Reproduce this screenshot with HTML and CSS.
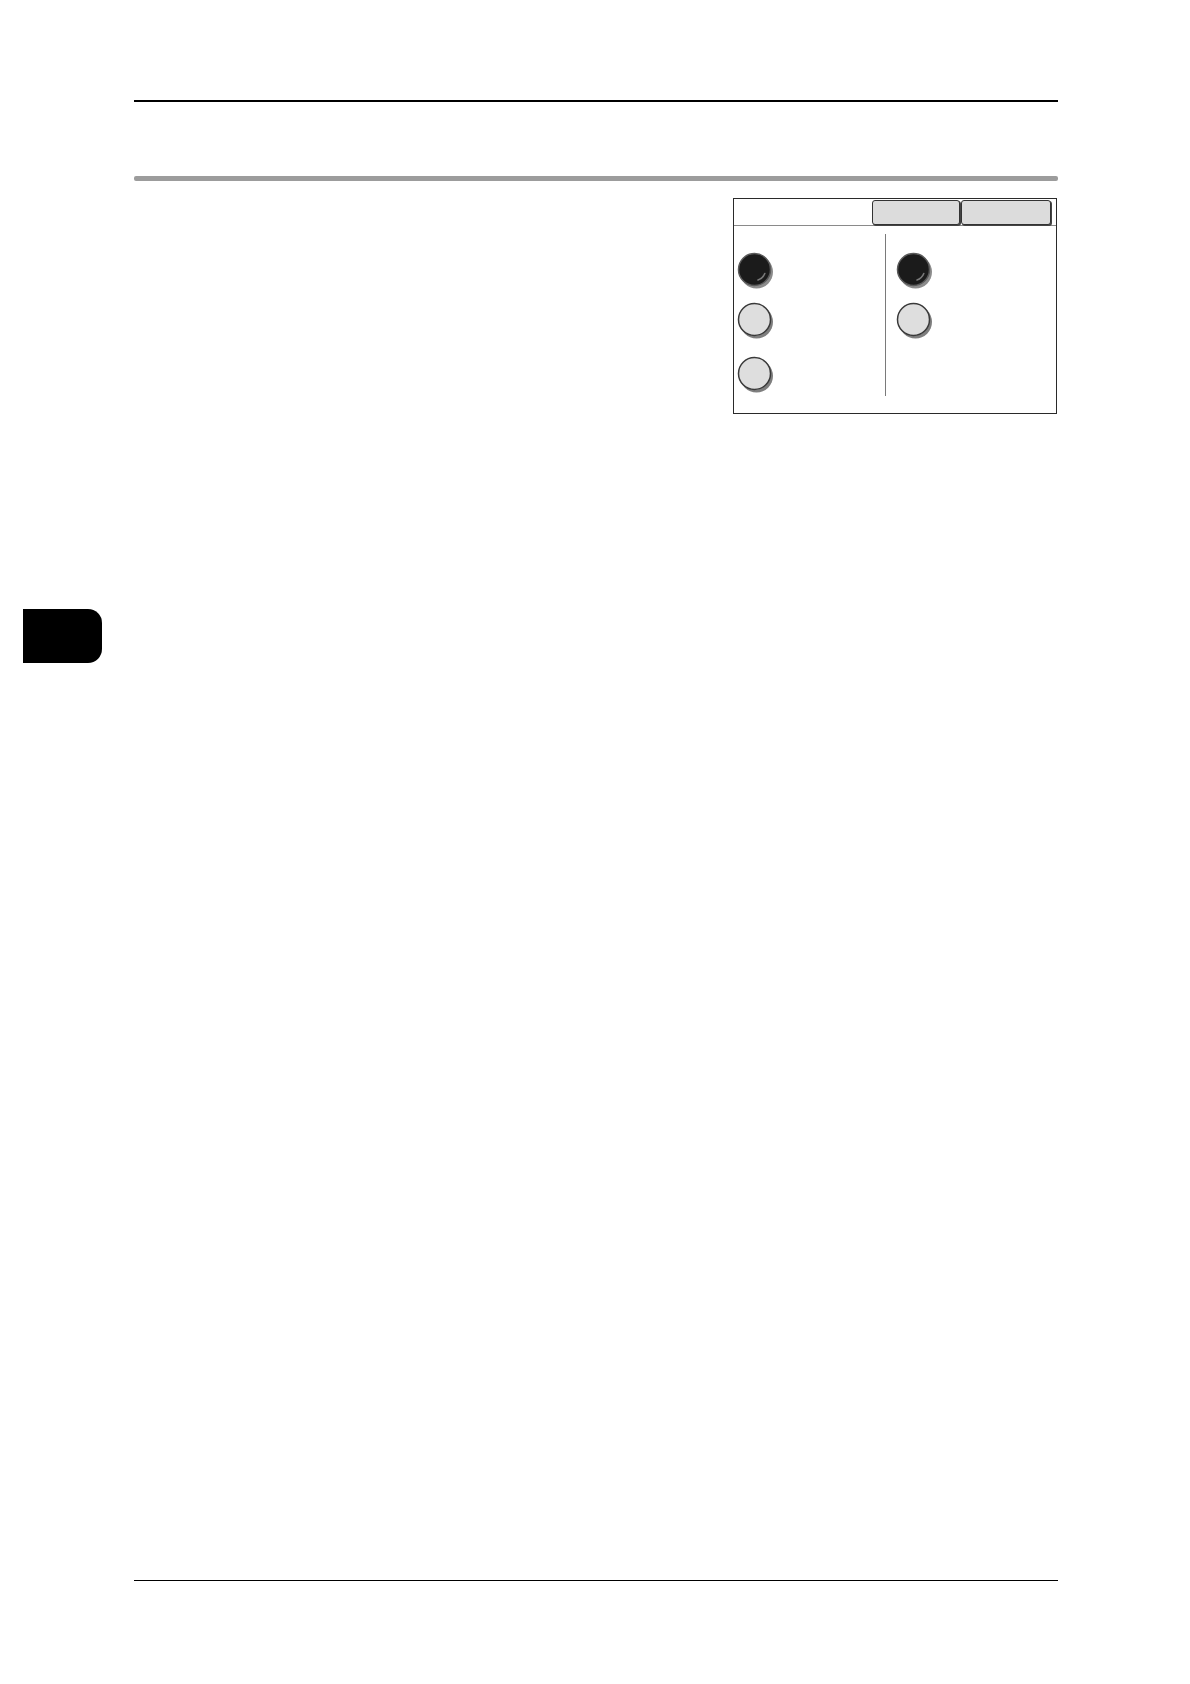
FILE: index.html
```html
<!DOCTYPE html>
<html lang="en">
<head>
<meta charset="utf-8">
<title>Page</title>
<link rel="stylesheet" href="styles.css">
</head>
<body>
<div class="page">
  <div class="top-rule"></div>
  <div class="section-bar"></div>
  <div class="content">
    <div class="panel">
      <div class="panel-header">
        <div class="btn btn-a"></div>
        <div class="btn btn-b"></div>
      </div>
      <div class="panel-body">
        <div class="col col-left">
          <div class="radio r1"><svg width="40" height="40" viewBox="0 0 40 40"><circle cx="19.5" cy="20" r="16.5" fill="#8c8c8c"/><circle cx="17.5" cy="17.5" r="16" fill="#1b1b1b" stroke="#5a5a5a" stroke-width="1.5"/><path d="M27.8 21.5 A11 11 0 0 1 21 28" fill="none" stroke="#7a7a7a" stroke-width="1.6" stroke-linecap="round"/></svg></div>
          <div class="radio r2"><svg width="40" height="40" viewBox="0 0 40 40"><circle cx="19.5" cy="20" r="16.5" fill="#7e7e7e"/><circle cx="17.5" cy="17.5" r="16" fill="#dedede" stroke="#3a3a3a" stroke-width="1.5"/></svg></div>
          <div class="radio r3"><svg width="40" height="40" viewBox="0 0 40 40"><circle cx="19.5" cy="20" r="16.5" fill="#7e7e7e"/><circle cx="17.5" cy="17.5" r="16" fill="#dedede" stroke="#3a3a3a" stroke-width="1.5"/></svg></div>
        </div>
        <div class="divider"></div>
        <div class="col col-right">
          <div class="radio r1"><svg width="40" height="40" viewBox="0 0 40 40"><circle cx="19.5" cy="20" r="16.5" fill="#8c8c8c"/><circle cx="17.5" cy="17.5" r="16" fill="#1b1b1b" stroke="#5a5a5a" stroke-width="1.5"/><path d="M27.8 21.5 A11 11 0 0 1 21 28" fill="none" stroke="#7a7a7a" stroke-width="1.6" stroke-linecap="round"/></svg></div>
          <div class="radio r2"><svg width="40" height="40" viewBox="0 0 40 40"><circle cx="19.5" cy="20" r="16.5" fill="#7e7e7e"/><circle cx="17.5" cy="17.5" r="16" fill="#dedede" stroke="#3a3a3a" stroke-width="1.5"/></svg></div>
        </div>
      </div>
    </div>
  </div>
  <div class="chapter-tab"></div>
  <div class="bottom-rule"></div>
</div>
</body>
</html>
```

FILE: styles.css
```css
html, body {
  margin: 0;
  padding: 0;
  background: #ffffff;
  font-family: "Liberation Sans", Arial, sans-serif;
}

.page {
  width: 1190px;
  height: 1684px;
  overflow: hidden;
}

.top-rule {
  margin: 100px 0 0 134px;
  width: 924px;
  height: 1.5px;
  background: #000;
}

.section-bar {
  margin: 74px 0 0 134px;
  width: 924px;
  height: 5px;
  background: #9c9c9c;
  border-radius: 2px;
}

.content {
  margin: 17px 0 0 134px;
  width: 923px;
  display: flex;
  justify-content: flex-end;
}

.panel {
  box-sizing: border-box;
  width: 324px;
  height: 216px;
  border: 1.5px solid #2a2a2a;
  display: flex;
  flex-direction: column;
}

.panel-header {
  height: 29px;
  border-bottom: 1px solid #8a8a8a;
  display: flex;
  justify-content: flex-end;
  align-items: flex-start;
  padding: 1px 5px 0 0;
  box-sizing: border-box;
}

.btn {
  box-sizing: border-box;
  height: 25px;
  background: #dcdcdc;
  border: 1px solid #333;
  border-radius: 3px;
  box-shadow: 1px 1px 0 #444;
}

.btn-a {
  width: 88px;
  margin-right: 1px;
}

.btn-b {
  width: 90px;
}

.panel-body {
  flex: 1;
  display: flex;
  padding: 8px 0 20px 0;
}

.col {
  display: flex;
  flex-direction: column;
}

.col-left {
  width: 151px;
  padding-left: 3px;
  box-sizing: border-box;
}

.col-right {
  padding-left: 10px;
}

.divider {
  width: 1px;
  background: #7a7a7a;
}

.radio {
  width: 40px;
  height: 40px;
}

.radio svg {
  display: block;
}

.r1 {
  margin-top: 18px;
}

.r2 {
  margin-top: 10px;
}

.r3 {
  margin-top: 14px;
}

.chapter-tab {
  margin: 195px 0 0 23px;
  width: 79px;
  height: 54px;
  background: #000;
  border-radius: 0 14px 14px 0;
}

.bottom-rule {
  margin: 917px 0 0 134px;
  width: 924px;
  height: 1.5px;
  background: #000;
}
```
